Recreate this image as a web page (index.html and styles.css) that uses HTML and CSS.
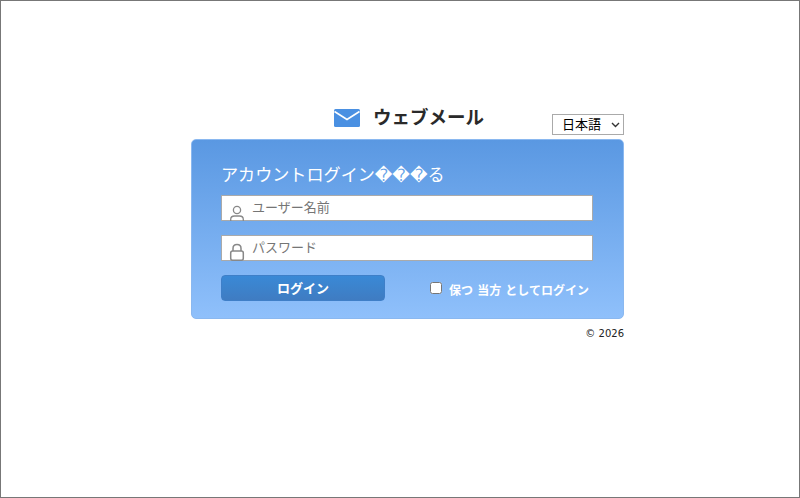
FILE: index.html
```html
<!DOCTYPE html>
<html lang="ja">
<head>
<meta charset="utf-8">
<title>ウェブメール</title>
<link rel="stylesheet" href="styles.css">
</head>
<body>
<div class="frame">
  <main class="login">
    <header class="head">
      <div class="brand">
        <svg class="brand-icon" width="26" height="18" viewBox="0 0 26 18" aria-hidden="true">
          <rect width="26" height="18" rx="1.5" fill="#4a90e2"/>
          <path d="M0.5 2.5 13 10.5 25.5 2.5" fill="none" stroke="#fff" stroke-width="1.6"/>
        </svg>
        <h1 class="brand-name">ウェブメール</h1>
      </div>
      <select class="lang"><option>日本語</option></select>
    </header>
    <form class="panel">
      <h2 class="panel-title">アカウントログイン���る</h2>
      <div class="field">
        <svg class="field-icon" width="16" height="16" viewBox="0 0 16 16" aria-hidden="true">
          <circle cx="8" cy="5" r="3.6" fill="none" stroke="#888" stroke-width="1.3"/>
          <path d="M1.7 16V14.5C1.7 12.3 3.5 11 5.5 11H10.5C12.5 11 14.3 12.3 14.3 14.5V16" fill="none" stroke="#888" stroke-width="1.3"/>
        </svg>
        <input class="input" type="text" placeholder="ユーザー名前">
      </div>
      <div class="field">
        <svg class="field-icon" width="16" height="18" viewBox="0 0 16 18" aria-hidden="true">
          <path d="M4 8V5.5C4 3.2 5.7 1.6 8 1.6S12 3.2 12 5.5V8" fill="none" stroke="#888" stroke-width="1.5"/>
          <rect x="1.7" y="8" width="12.6" height="9.2" rx="2" fill="none" stroke="#888" stroke-width="1.5"/>
        </svg>
        <input class="input" type="password" placeholder="パスワード">
      </div>
      <div class="actions">
        <button class="submit" type="button">ログイン</button>
        <label class="keep"><input class="check" type="checkbox"><span>保つ 当方 としてログイン</span></label>
      </div>
    </form>
    <footer class="copy">© 2026</footer>
  </main>
</div>
</body>
</html>
```
FILE: styles.css
```css
* { box-sizing: border-box; }
html, body { margin: 0; height: 100%; }
body {
  font-family: "DejaVu Sans", "Noto Sans CJK JP", sans-serif;
  background: #fff;
  color: #222;
}
.frame {
  width: 800px;
  height: 498px;
  border: 1px solid #777;
  display: flex;
  justify-content: center;
  padding-top: 102px;
  padding-left: 15px;
}
.login { width: 433px; }
.head {
  height: 36px;
  display: flex;
  align-items: flex-start;
  position: relative;
}
.brand {
  display: flex;
  align-items: center;
  gap: 13px;
  margin-left: 143px;
}
.brand-icon { display: block; }
.brand-name {
  margin: 1px 0 0;
  font-size: 18.5px;
  line-height: 28px;
  font-weight: 700;
  color: #2a2a2a;
}
.lang {
  position: absolute;
  right: 0;
  top: 11px;
  width: 72px;
  height: 21px;
  font: 13px "DejaVu Sans", "Noto Sans CJK JP", sans-serif;
  color: #000;
  border: 1px solid #aaa;
  border-radius: 0;
  padding: 0 0 0 9px;
  appearance: none;
  background: #fff url("data:image/svg+xml,%3Csvg xmlns='http://www.w3.org/2000/svg' width='9' height='6'%3E%3Cpath d='M1 1l3.5 3.5L8 1' fill='none' stroke='%23333' stroke-width='1.4'/%3E%3C/svg%3E") no-repeat right 3px center;
}
.panel {
  height: 180px;
  padding: 22px 29px 0;
  border: 1px solid #8ab8f0;
  border-radius: 5px;
  background: linear-gradient(#5a98e2, #8fc0fb);
}
.panel-title {
  margin: 0 0 7px;
  font-size: 17.1px;
  line-height: 26px;
  font-weight: 400;
  color: #fff;
}
.field {
  position: relative;
  height: 26px;
  margin-bottom: 14px;
}
.field-icon { position: absolute; left: 8px; bottom: 0; z-index: 1; }
.input {
  display: block;
  width: 372px;
  height: 26px;
  padding: 0 8px 2px 30px;
  border: 1px solid #aaa;
  background-color: #fff;
  font: 13px "DejaVu Sans", "Noto Sans CJK JP", sans-serif;
  color: #333;
}
.input::placeholder { color: #757575; opacity: 1; }
.actions {
  display: flex;
  align-items: center;
  justify-content: space-between;
}
.submit {
  width: 164px;
  height: 26px;
  padding: 0 0 2px;
  border: 1px solid #3f7fc8;
  border-radius: 4px;
  background: linear-gradient(#3a89d6, #3f7cc2);
  color: #fff;
  font: 700 13px "DejaVu Sans", "Noto Sans CJK JP", sans-serif;
}
.keep {
  display: flex;
  align-items: center;
  gap: 7px;
  margin-right: 5px;
  margin-top: 2px;
  font-size: 12px;
  font-weight: 700;
  color: #fff;
}
.check { margin: 0 0 3px; width: 12px; height: 12px; }
.copy {
  margin-top: 7px;
  text-align: right;
  font-size: 10px;
  line-height: 15px;
  color: #222;
}
```
